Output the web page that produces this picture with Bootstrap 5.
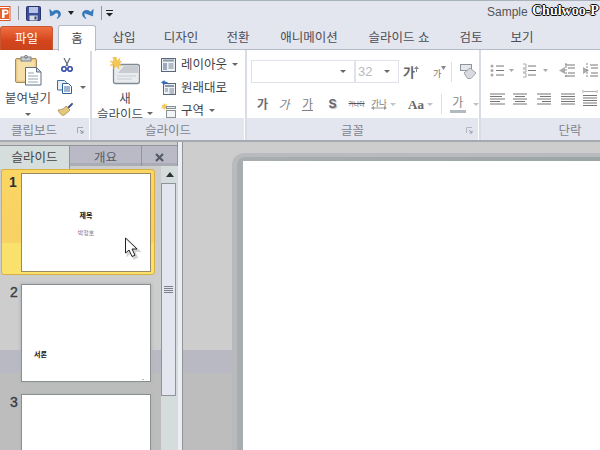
<!DOCTYPE html>
<html lang="ko">
<head>
<meta charset="utf-8">
<title>PowerPoint</title>
<link href="https://cdn.jsdelivr.net/npm/bootstrap@5.3.0/dist/css/bootstrap.min.css" rel="stylesheet">
<style>
html,body{margin:0;width:600px;height:450px;overflow:hidden;background:#ccc}
body{font-family:"Noto Sans CJK KR","Liberation Sans",sans-serif;font-size:12.5px;line-height:1;color:#4a4d55}
svg{display:block;flex:none}
.ppt-app{width:600px;height:450px;position:relative;overflow:hidden}
.title-strip{height:25px;background:#e4e6ef;border-top:1px solid #a9b3ba;flex:none}
.qa-sep{width:1px;height:14px;background:#8f959c;margin:0 7px}
.qa-sep2{margin:0 0 0 7px}
.undo-i{margin-left:8px}
.redo-i{margin-left:6px}
.custom-i{margin-left:4px}
.doc-title{position:absolute;left:487px;top:5px;font-family:"Liberation Sans",sans-serif;font-size:12px;color:#555;line-height:15px}
.wm-text{position:absolute;left:532px;top:3px;font-family:"Liberation Serif",serif;font-weight:700;font-size:14px;line-height:15px;color:#fff;white-space:nowrap;text-shadow:1px 0 0 #000,-1px 0 0 #000,0 1px 0 #000,0 -1px 0 #000}
.tab-strip{height:25px;background:#e4e6ef;border-bottom:1px solid #b4bcc5;flex:none}
.file-tab{width:53px;height:24px;margin-top:1px;background:linear-gradient(#ef6f43,#d5451d 60%,#c9421c);color:#fff;border-radius:3px 3px 0 0;border:1px solid #c9562f;border-bottom:0}
.home-tab{width:38px;height:26px;margin:0 0 -1px 5px;background:#fff;border:1px solid #b4bcc5;border-bottom:0;border-radius:3px 3px 0 0;position:relative;color:#444}
.tab-cell{height:24px}
.tw50{width:50px}.tw52{width:52px}.tw56{width:56px}.tw58{width:58px}.tw86{width:86px}.tw94{width:94px}
.ribbon-bar{height:92px;background:#fff;border-bottom:2px solid #a3aab0;flex:none}
.rgroup{height:90px;flex:none;border-right:2px solid #d8dce4}
.rgroup-a{width:92px}.rgroup-b{width:155px}.rgroup-c{width:234px}.rgroup-d{width:179px;border-right:0}
.rbody{height:68px}
.rlabel{height:22px;background:#e4e6ef;color:#80848e;font-size:12.5px;position:relative;margin-right:1px;padding-top:2px}
.lab-clip{padding-right:21px}
.lab-font{padding-right:20px}
.launch{position:absolute;right:5px;top:9px}
.paste-col{width:56px;padding-top:5px}
.paste-label{margin-top:6px}
.paste-drop{margin-top:8px}
.side-col{width:34px;padding:8px 0 0 1px;gap:8px}
.newslide-col{width:68px;margin-left:-1px;padding-top:7px}
.new-label{margin-top:7px}
.new-label2{margin-top:3px;gap:4px}
.drop{width:0;height:0;border-left:3px solid transparent;border-right:3px solid transparent;border-top:3px solid #666;flex:none}
.drop-soft{border-top-color:#bfc2c7}
.drop-qa{margin-left:5px;border-top-color:#222;border-left-width:3.5px;border-right-width:3.5px;border-top-width:4px}
.cmd-col{padding:7px 0 0 2px;gap:8px}
.cmd-row{height:16px;gap:5px;color:#3f4249}
.font-row{padding:10px 0 0 4px}
.font-box{height:23px;border:1px solid #dfe2e8;background:#fff}
.fb1{width:104px}.fb2{width:44px;color:#b8bbc2;font-family:"Liberation Sans",sans-serif;font-size:13px;padding-left:2px}
.grow-g{color:#666;width:22px;margin-left:4px}
.shrink-g{width:15px;margin-left:8px}
.g-big{font-weight:700;font-size:13px;color:#666}
.g-tiny{font-size:9px;margin-top:3px;color:#777}
.arr-up{margin:-6px 0 0 -1px}
.arr-dn{margin:-7px 0 0 0}
.sep-v{width:1px;height:20px;background:#dcdfe5}
.sep-font{margin-left:3px}
.eraser{margin-left:8px}
.format-row{padding:11px 0 0 5px}
.fc{display:flex;justify-content:center;white-space:nowrap}
.f1{width:21px;font-weight:700;font-size:12px;color:#6a6d74}
.f2{width:22px;font-size:12px;color:#7d8087;font-style:italic}
.f3{width:25px;font-size:12px;color:#7d8087;text-decoration:underline}
.f4{width:25px;font-family:"Liberation Sans",sans-serif;font-weight:700;color:#666;font-size:12px;text-shadow:1px 1px 1px #bbb}
.f5{width:23px;font-size:6px;color:#555;text-decoration:line-through;letter-spacing:-.2px}
.f6{width:22px;font-size:8.5px;color:#777;flex-direction:column;align-items:center}
.f6-drop{margin-right:12px}
.f7{font-family:"Liberation Serif",serif;font-weight:700;font-size:13px;color:#666;margin-right:3px}
.f7-drop{margin-right:8px}
.f8{width:20px;margin-left:6px;color:#888;font-size:12px;flex-direction:column;align-items:center}
.f8-bar{display:block;width:16px;height:3px;background:#b4b8bf;margin-top:2px}
.f8-drop{margin-left:5px}
.para-col{padding:13px 0 0 9px;gap:12px}
.workspace{flex:1 1 auto;min-height:0;background:linear-gradient(#cdcdcd 0,#cdcdcd 208px,#b9b9c4 208px,#b9b9c4 231px,#bdbdbd 231px)}
.side-pane{width:178px;flex:none;border-right:1px solid #8e9499}
.pane-head{height:21px;margin-top:3px;background:#b9bac6;border-top:1px solid #8e9499;border-bottom:3px solid #aaadb6;flex:none}
.ptab-on{width:70px;height:23px;background:#d5dedd;border-right:1px solid #8e9499;color:#444;margin-bottom:-3px}
.ptab-off{width:72px;height:20px;border-right:1px solid #8e9499;color:#5a5d66;padding-top:2px}
.ptab-x{flex:1;height:20px;padding-top:2px}
.pane-body{flex:1 1 auto;min-height:0}
.thumb-list{width:161px;flex:none;padding:3px 0 0 1px}
.thumb-row{width:154px;height:106px;border:1px solid #d9b044;border-radius:3px;flex:none;padding:3px 0 0 19px;position:relative;margin-bottom:8px}
.thumb-on{background:linear-gradient(#fbd662 0,#f7d264 70%,#fae16c 70%)}
.thumb-plain{border-color:transparent;height:98px;margin-bottom:12px;padding-top:0}
.num{position:absolute;left:7px;top:5px;font-family:"Liberation Sans",sans-serif;font-size:14px;font-weight:700;color:#2b2f36}
.num2{left:8px;top:1px;color:#3a3e46;font-weight:400;-webkit-text-stroke:.4px #3a3e46}
.thumb{width:130px;background:#fff;height:99px;border:1px solid #8a8e8f;box-shadow:0 0 3px 1px #b4b8bb}
.thumb-on .thumb{box-shadow:none;border-color:#9a8a60;padding-top:37px}
.plain-thumb{height:98px}
.t-title{font-size:7px;font-weight:700;color:#111;line-height:8px}
.t-sub{font-size:6px;color:#8d6f86;line-height:7px;margin-top:10px}
.t-body{font-size:7px;font-weight:700;color:#111;margin:65px 0 0 12px;line-height:8px}
.t-dot{width:2px;height:1px;background:#bbb;margin:21px 0 0 120px}
.scroll-col{width:17px;flex:none;background:#d4dddc}
.sc-btn{height:17px;flex:none;background:#d4dddc}
.sc-up{width:0;height:0;border-left:4.5px solid transparent;border-right:4.5px solid transparent;border-bottom:5px solid #2f3338}
.sc-thumb{height:213px;width:15px;background:#e4e6ef;border:1px solid #8e9499;flex:none}
.grip{width:9px;height:1px;background:#7c8187;margin-bottom:1px}
.gutter{width:5px;flex:none;background:#eceef4;border-right:1px solid #8e9499}
.edit-area{flex:1 1 auto;min-width:0;padding:11px 0 0 49px}
.slide-frame{flex:1 1 auto;padding:4px 0 0 5px;border-radius:12px 0 0 0;background:#b9babd}
.slide-frame-in{flex:1 1 auto;padding:4px 0 0 6px;border-radius:8px 0 0 0;background:linear-gradient(90deg,#a8aeb0,#9ca5a6)}
.slide-sheet{background:#fff;flex:1 1 auto}
.cursor-mark{position:absolute;left:124px;top:237px}
</style>
</head>
<body>
<div class="ppt-app d-flex flex-column">

  <div class="title-strip d-flex align-items-center">
    <svg width="11" height="15" viewBox="0 0 11 15"><rect x="-3" y="0.5" width="13" height="14" fill="#fff" stroke="#d9572a"/><rect x="-1" y="2" width="10" height="11" fill="#e8622d"/><path d="M2 3.500h4a2.500 2.500 0 0 1 0 5H4.500V12H2z" fill="#fff"/><path d="M4.500 5v2H6a1 1 0 0 0 0-2z" fill="#e8622d"/></svg>
    <span class="qa-sep"></span>
    <svg width="15" height="15" viewBox="0 0 15 15"><rect x=".5" y=".5" width="14" height="14" rx="1" fill="#3b4f9d" stroke="#2a3466"/><rect x="3" y="1" width="9" height="6" fill="#b7c4e6"/><rect x="3.500" y="9.500" width="8" height="5" fill="#d8dce6"/><rect x="8.500" y="10.500" width="2" height="3" fill="#39427a"/></svg>
    <svg class="undo-i" width="14" height="13" viewBox="0 0 14 13"><path d="M3 5.500c3-3.500 8-2.500 8.500 1 .3 2.500-1.500 4.500-3.500 5 2.800-3 1.500-6.500-1.500-5.500L5 7.500 1.500 9 .7 2.500 2.500 4z" fill="#2e7bc4" stroke="#1f5f9f" stroke-width=".5"/></svg>
    <span class="drop drop-qa"></span>
    <svg class="redo-i" width="14" height="13" viewBox="0 0 14 13"><path d="M11 5.500c-3-3.500-8-2.500-8.500 1-.3 2.500 1.500 4.500 3.500 5-2.800-3-1.500-6.500-1.500-5.500L9 7.500 12.500 9l.8-6.500L11.500 4z" fill="#2e7bc4" stroke="#1f5f9f" stroke-width=".5"/></svg>
    <span class="qa-sep qa-sep2"></span>
    <svg class="custom-i" width="8" height="7" viewBox="0 0 8 7"><rect y="0" width="7" height="1" fill="#222"/><path d="M0 3h7L3.500 6.500z" fill="#222"/></svg>
  </div>
  <div class="doc-title">Sample</div>
  <div class="wm-text">Chulwoo-P</div>

  <div class="tab-strip d-flex">
    <div class="file-tab d-flex align-items-center justify-content-center">파일</div>
    <div class="home-tab d-flex align-items-center justify-content-center">홈</div>
    <div class="tab-cell tw56 d-flex align-items-center justify-content-center">삽입</div>
    <div class="tab-cell tw58 d-flex align-items-center justify-content-center">디자인</div>
    <div class="tab-cell tw56 d-flex align-items-center justify-content-center">전환</div>
    <div class="tab-cell tw86 d-flex align-items-center justify-content-center">애니메이션</div>
    <div class="tab-cell tw94 d-flex align-items-center justify-content-center">슬라이드 쇼</div>
    <div class="tab-cell tw50 d-flex align-items-center justify-content-center">검토</div>
    <div class="tab-cell tw52 d-flex align-items-center justify-content-center">보기</div>
  </div>

  <div class="ribbon-bar d-flex">
    <div class="rgroup rgroup-a d-flex flex-column">
      <div class="rbody d-flex">
        <div class="paste-col d-flex flex-column align-items-center">
          <svg width="27" height="31" viewBox="0 0 27 31"><rect x=".5" y="3.500" width="21" height="24" rx="1.500" fill="#e9c98a" stroke="#a88d55"/><rect x="2.500" y="5.500" width="17" height="20" fill="#f7e0a8"/><rect x="6" y="2" width="10" height="4" fill="#c9cdd2" stroke="#7f8488"/><circle cx="11" cy="1.800" r="1.500" fill="none" stroke="#7f8488"/><path d="M10.500 12.500h11l4.500 4.500v13h-15.500z" fill="#fff" stroke="#5e6f80"/><path d="M21.500 12.500v4.500h4.500z" fill="#d7dee6" stroke="#5e6f80"/><path d="M13 18h6M13 21h10M13 24h10M13 27h10" stroke="#9aa5ae"/></svg>
          <div class="paste-label">붙여넣기</div>
          <span class="drop paste-drop"></span>
        </div>
        <div class="side-col d-flex flex-column align-items-start">
          <svg class="ms-1" width="12" height="14" viewBox="0 0 12 14"><path d="M3 0l4 8M9 0L5 8" stroke="#6b7280" stroke-width="1.300"/><circle cx="3" cy="11" r="2.200" fill="none" stroke="#2c45a5" stroke-width="1.500"/><circle cx="9" cy="11" r="2.200" fill="none" stroke="#2c45a5" stroke-width="1.500"/></svg>
          <div class="d-flex align-items-center"><svg width="15" height="14" viewBox="0 0 15 14"><path d="M.5.500h7l2 2V10H.5z" fill="#e9eff7" stroke="#3b6ea5"/><path d="M5.500 3.500h6l3 3v7h-9z" fill="#fff" stroke="#2e5f96"/><path d="M7 7h6M7 9h6M7 11h6" stroke="#3b6ea5"/></svg><span class="drop ms-2"></span></div>
          <svg width="17" height="14" viewBox="0 0 17 14"><path d="M1 8c4 0 7-2 8-4l4 4c-2 2-5 5-7 5.500C4 13 2 10.500 1 8z" fill="#e4c77d" stroke="#a98e55" stroke-width=".8"/><path d="M10.500 5L15 .8l1.200 1.300L12 6.500z" fill="#3a4a78"/></svg>
        </div>
      </div>
      <div class="rlabel lab-clip d-flex align-items-center justify-content-center">클립보드
        <svg class="launch" width="7" height="7" viewBox="0 0 7 7"><path d="M.5 6V.5H6" fill="none" stroke="#a4a8ae"/><path d="M3 3l3 3M6 3.500V6H3.500" fill="none" stroke="#8b9097"/></svg>
      </div>
    </div>

    <div class="rgroup rgroup-b d-flex flex-column">
      <div class="rbody d-flex">
        <div class="newslide-col d-flex flex-column align-items-center">
          <svg width="30" height="28" viewBox="0 0 30 28"><rect x="3.500" y="7.500" width="26" height="19" rx="2" fill="#e9ecef" stroke="#7f8a93" stroke-width="1.300"/><path d="M14 9h14v7H8z" fill="#c8ccd2"/><path d="M7 19h19M7 22h15" stroke="#c6ccd2"/><path d="M6 0l1.300 4L10 .8 9 4.800 12 4 9.200 6.500 12 8.500 8.400 8l.6 4L6 9l-2.500 3 .4-4L0 8.500 3 6.500 0 4l3.700.8L3 0z" fill="#f3c858" stroke="#eab640" stroke-width=".5"/></svg>
          <div class="new-label">새</div>
          <div class="new-label2 d-flex align-items-center">슬라이드<span class="drop"></span></div>
        </div>
        <div class="cmd-col d-flex flex-column">
          <div class="cmd-row d-flex align-items-center">
            <svg width="15" height="14" viewBox="0 0 15 14"><rect x=".5" y=".5" width="14" height="13" fill="#eef1f5" stroke="#58677a"/><rect x="2" y="1.500" width="11" height="2" fill="#8a98a8"/><rect x="2" y="5" width="4" height="7" fill="#9dabbd"/><path d="M7.500 6h5M7.500 8h5M7.500 10h5" stroke="#7a8898"/></svg>
            <span>레이아웃</span><span class="drop"></span>
          </div>
          <div class="cmd-row d-flex align-items-center">
            <svg width="15" height="15" viewBox="0 0 15 15"><rect x="2.500" y="3.500" width="12" height="11" fill="#eef1f5" stroke="#58677a"/><rect x="4" y="5" width="9" height="2" fill="#8a98a8"/><path d="M4 9h3M4 11h3M8.500 9h4.500M8.500 11h4.500M8.500 13h4.500" stroke="#7a8898"/><path d="M0 2.500L3.500 0v1.500c2.500 0 4 1 4 3-1-1-2.500-1.300-4-1.200V5z" fill="#2f6fbc"/></svg>
            <span>원래대로</span>
          </div>
          <div class="cmd-row d-flex align-items-center">
            <svg width="15" height="15" viewBox="0 0 15 15"><path d="M3.500 0l.8 2L6 .5 5.500 3 7.500 3.500 5.500 4.500 6.500 7 4 5.500 3 7.500 2.500 5 0 5.500 1.500 3.500 0 2l2.300.3z" fill="#f3c858"/><rect x="5.500" y="3.500" width="9" height="2" fill="#e6e8ec" stroke="#8a9098"/><rect x="5.500" y="7.500" width="9" height="7" fill="#f2f4f6" stroke="#8a9098"/></svg>
            <span>구역</span><span class="drop"></span>
          </div>
        </div>
      </div>
      <div class="rlabel d-flex align-items-center justify-content-center">슬라이드</div>
    </div>

    <div class="rgroup rgroup-c d-flex flex-column">
      <div class="rbody d-flex flex-column">
        <div class="font-row d-flex align-items-center">
          <div class="font-box fb1 d-flex align-items-center justify-content-end pe-2"><span class="drop"></span></div>
          <div class="font-box fb2 d-flex align-items-center justify-content-between pe-2">32<span class="drop"></span></div>
          <div class="grow-g d-flex align-items-center"><span class="g-big">가</span><svg class="arr-up" width="5" height="6" viewBox="0 0 5 6"><path d="M2.500 0L5 3H3v3H2V3H0z" fill="#888"/></svg></div>
          <div class="shrink-g d-flex align-items-center"><span class="g-tiny">가</span><svg class="arr-dn" width="5" height="4" viewBox="0 0 5 4"><path d="M0 0h5L2.500 4z" fill="#888"/></svg></div>
          <span class="sep-v sep-font"></span>
          <svg class="eraser" width="17" height="15" viewBox="0 0 17 15"><rect x=".5" y=".5" width="11" height="6" fill="#e4e7eb" stroke="#8f959c"/><path d="M4 9l6-5 6 5-5 5.500H7.500z" fill="#d8dadf" stroke="#a0a4aa"/></svg>
        </div>
        <div class="format-row d-flex align-items-center">
          <span class="fc f1">가</span>
          <span class="fc f2">가</span>
          <span class="fc f3">가</span>
          <span class="fc f4">S</span>
          <span class="fc f5">가나다</span>
          <span class="fc f6">가나<svg width="16" height="4" viewBox="0 0 16 4"><path d="M0 2l3-2v1.500h10V0l3 2-3 2V2.500H3V4z" fill="#999"/></svg></span>
          <span class="drop drop-soft f6-drop"></span>
          <span class="f7">Aa</span>
          <span class="drop drop-soft f7-drop"></span>
          <span class="sep-v"></span>
          <span class="fc f8">가<span class="f8-bar"></span></span>
          <span class="drop drop-soft f8-drop"></span>
        </div>
      </div>
      <div class="rlabel lab-font d-flex align-items-center justify-content-center">글꼴
        <svg class="launch" width="7" height="7" viewBox="0 0 7 7"><path d="M.5 6V.5H6" fill="none" stroke="#b4b8be"/><path d="M3 3l3 3M6 3.500V6H3.500" fill="none" stroke="#9ba0a7"/></svg>
      </div>
    </div>

    <div class="rgroup rgroup-d d-flex flex-column">
      <div class="rbody para-col d-flex flex-column">
        <svg width="112" height="15" viewBox="0 0 112 15"><g stroke="#777"><path d="M6 3h8M6 7.500h8M6 12h8M38 3h8M38 7.500h8M38 12h8"/></g><g fill="#aaa"><circle cx="2" cy="3" r="1.500"/><circle cx="2" cy="7.500" r="1.500"/><circle cx="2" cy="12" r="1.500"/><path d="M19 6h5l-2.500 3zM53 6h5l-2.500 3zM69 7.500l6-3.500v7z"/><path d="M99 7.500l-6-3.500v7z"/></g><path d="M33 1h3v4h-3M33 6h3v3h-3M33 10h3v4h-3" fill="none" stroke="#aaa"/><g stroke="#777"><path d="M75 2h10M78 5h7M78 10h7M75 13h10M100 2h8M101 5h7M101 10h7M100 13h8"/></g><path d="M76 0v15M97 0v15" stroke="#888" stroke-dasharray="2 1"/></svg>
        <svg width="112" height="17" viewBox="0 0 112 17"><g stroke="#777"><path d="M0 4h15M0 6.500h12M0 9h15M0 11.500h10M0 14h15"/><path d="M23 4h14M25 6.500h10M23 9h14M25 11.500h10M23 14h14"/><path d="M47 4h14M50 6.500h11M47 9h14M52 11.500h9M47 14h14"/><path d="M71 4h14M71 6.500h14M71 9h14M71 11.500h14M71 14h14"/><path d="M93 5.500h14M93 8h14M93 10.500h14M93 13h14M93 15.500h14"/></g><path d="M93 3V0M107 3V0" stroke="#aaa"/><path d="M94 1.500h12" stroke="#aaa"/></svg>
      </div>
      <div class="rlabel d-flex align-items-center justify-content-center">단락</div>
    </div>
  </div>

  <div class="workspace d-flex">
    <div class="side-pane d-flex flex-column">
      <div class="pane-head d-flex">
        <div class="ptab-on d-flex align-items-center justify-content-center">슬라이드</div>
        <div class="ptab-off d-flex align-items-center justify-content-center">개요</div>
        <div class="ptab-x d-flex align-items-center justify-content-center">
          <svg width="9" height="9" viewBox="0 0 9 9"><path d="M1 1l7 7M8 1L1 8" stroke="#555b63" stroke-width="2.200"/></svg>
        </div>
      </div>
      <div class="pane-body d-flex">
        <div class="thumb-list">
          <div class="thumb-row thumb-on">
            <span class="num">1</span>
            <div class="thumb d-flex flex-column align-items-center">
              <div class="t-title">제목</div>
              <div class="t-sub">박정호</div>
            </div>
          </div>
          <div class="thumb-row thumb-plain">
            <span class="num num2">2</span>
            <div class="thumb plain-thumb">
              <div class="t-body">서론</div>
              <div class="t-dot"></div>
            </div>
          </div>
          <div class="thumb-row thumb-plain">
            <span class="num num2">3</span>
            <div class="thumb plain-thumb"></div>
          </div>
        </div>
        <div class="scroll-col d-flex flex-column">
          <div class="sc-btn d-flex align-items-center justify-content-center"><span class="sc-up"></span></div>
          <div class="sc-thumb d-flex flex-column align-items-center justify-content-center">
            <span class="grip"></span><span class="grip"></span><span class="grip"></span><span class="grip"></span>
          </div>
        </div>
      </div>
    </div>
    <div class="gutter"></div>
    <div class="edit-area d-flex">
      <div class="slide-frame d-flex"><div class="slide-frame-in d-flex"><div class="slide-sheet"></div></div></div>
    </div>
  </div>

  <svg class="cursor-mark" width="18" height="24" viewBox="0 0 18 24"><path d="M1.500 1v15l3.500-3 3 6.500 3-1.300-3-6.200H13z" fill="#888" stroke="#888" stroke-width="2" opacity=".35" transform="translate(2 2)"/><path d="M1.500 1v15l3.500-3 3 6.500 3-1.300-3-6.200H13z" fill="#fff" stroke="#222"/></svg>
</div>
</body>
</html>
